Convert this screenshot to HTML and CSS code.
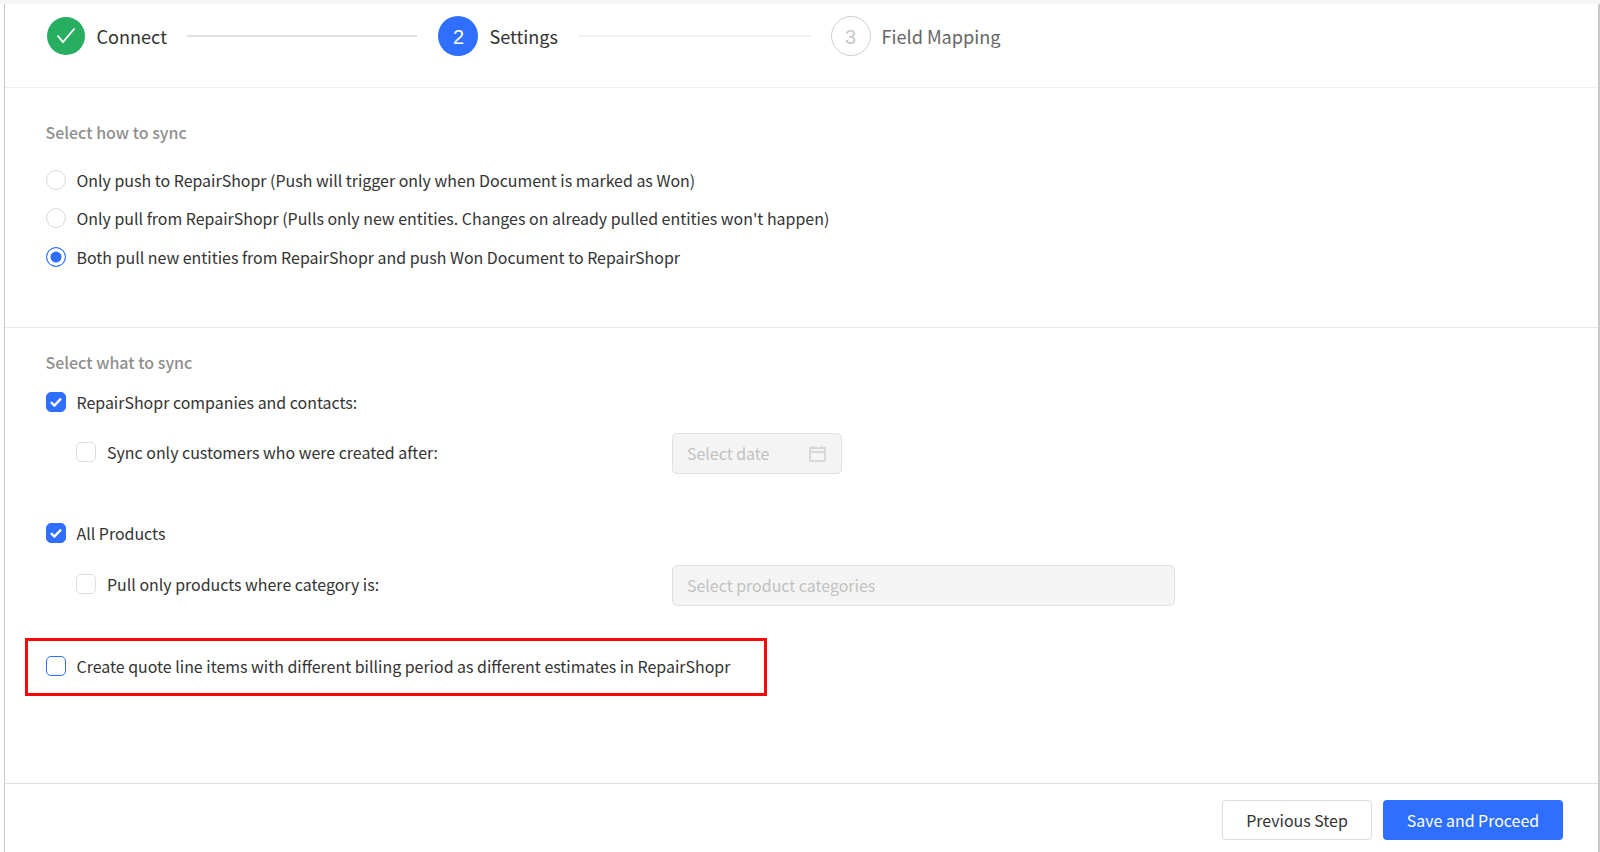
FILE: index.html
```html
<!DOCTYPE html>
<html lang="en">
<head>
<meta charset="utf-8">
<title>RepairShopr sync settings</title>
<link rel="stylesheet" href="styles.css">
</head>
<body>
<div class="page">
  <header class="stepper">
    <div class="step">
      <span class="bubble bubble-done">
        <svg width="20" height="17" viewBox="0 0 20 17"><path d="M1.500 8.500l5.500 6.500L18.500 1.500" fill="none" stroke="#fff" stroke-width="1.800"/></svg>
      </span>
      <span class="step-name">Connect</span>
    </div>
    <span class="rail rail-a"></span>
    <div class="step">
      <span class="bubble bubble-now">2</span>
      <span class="step-name">Settings</span>
    </div>
    <span class="rail rail-b"></span>
    <div class="step">
      <span class="bubble bubble-next">3</span>
      <span class="step-name step-muted">Field Mapping</span>
    </div>
  </header>

  <section class="how">
    <h2 class="heading">Select how to sync</h2>
    <div class="radios">
      <label class="row"><span class="radio"></span>Only push to RepairShopr (Push will trigger only when Document is marked as Won)</label>
      <label class="row"><span class="radio"></span>Only pull from RepairShopr (Pulls only new entities. Changes on already pulled entities won't happen)</label>
      <label class="row"><span class="radio radio-on"></span>Both pull new entities from RepairShopr and push Won Document to RepairShopr</label>
    </div>
  </section>

  <section class="what">
    <h2 class="heading">Select what to sync</h2>
    <label class="row row-first"><span class="check check-on"><svg width="14" height="12" viewBox="0 0 14 12"><path d="M2 6.200l3.400 3.400L12 2.600" fill="none" stroke="#fff" stroke-width="2.400"/></svg></span>RepairShopr companies and contacts:</label>
    <div class="sub">
      <label class="row sub-label"><span class="check"></span>Sync only customers who were created after:</label>
      <div class="field field-date">
        <span>Select date</span>
        <svg width="17" height="17" viewBox="0 0 17 17"><path d="M1 3h15v13H1zM1 7h15M4.500 1v3M12.500 1v3" fill="none" stroke="#cfcfcf" stroke-width="1.400"/></svg>
      </div>
    </div>
    <label class="row row-second"><span class="check check-on"><svg width="14" height="12" viewBox="0 0 14 12"><path d="M2 6.200l3.400 3.400L12 2.600" fill="none" stroke="#fff" stroke-width="2.400"/></svg></span>All Products</label>
    <div class="sub sub-second">
      <label class="row sub-label"><span class="check"></span>Pull only products where category is:</label>
      <div class="field field-wide"><span>Select product categories</span></div>
    </div>
    <div class="callout">
      <label class="row"><span class="check check-focus"></span>Create quote line items with different billing period as different estimates in RepairShopr</label>
    </div>
  </section>

  <footer class="actions">
    <button class="btn btn-ghost" type="button">Previous Step</button>
    <button class="btn btn-primary" type="button">Save and Proceed</button>
  </footer>
</div>
</body>
</html>
```
FILE: styles.css
```css
* { box-sizing: border-box; }
html, body { margin: 0; height: 852px; overflow: hidden; background: #fff; }
body {
  padding: 4px 0 0 4px;
  background: linear-gradient(#f5f5f5 4px, #fff 4px);
  font-family: "Noto Sans CJK SC", "Noto Sans", sans-serif;
  font-size: 15.950px;
  color: #333;
}
.page {
  height: 848px;
  background: #fff;
  border-left: 1.500px solid #c8c8c8;
  border-right: 2px solid #c8c8c8;
  display: flex;
  flex-direction: column;
}
.stepper {
  height: 84px;
  flex: none;
  border-bottom: 1.500px solid #efefef;
  padding: 11px 0 0 41.500px;
  display: flex;
  align-items: flex-start;
}
.step { display: flex; align-items: center; height: 41px; }
.bubble {
  width: 40px;
  height: 40px;
  flex: none;
  border-radius: 50%;
  display: flex;
  align-items: center;
  justify-content: center;
  padding-top: 3px;
  font-family: "Liberation Sans", sans-serif;
  font-size: 20px;
}
.bubble-done { width: 38px; height: 38px; padding-top: 0; margin-right: 1px; background: #27ae60; }
.bubble-now { background: #2e6fff; color: #fff; }
.bubble-next { border: 1.500px solid #cfcfcf; color: #c8c8c8; }
.step-name { margin-left: 11px; font-size: 18.100px; color: #333; }
.step-muted { color: #666; }
.rail { height: 1.500px; margin-top: 20px; flex: none; }
.rail-a { width: 230px; margin-left: 20.500px; margin-right: 21px; background: #e2e2e2; }
.rail-b { width: 232px; margin-left: 20.500px; margin-right: 20px; background: #f0f0f0; }
.how {
  height: 240px;
  flex: none;
  border-bottom: 1.500px solid #e8e8e8;
  padding: 31px 0 0 40.500px;
}
.heading {
  margin: 0;
  font-size: 16px;
  line-height: 26px;
  font-weight: 500;
  color: #8f8f8f;
}
.radios { margin-top: 23px; display: flex; flex-direction: column; gap: 14.400px; }
.row { display: flex; align-items: center; height: 24px; line-height: 24px; white-space: nowrap; }
.radio {
  width: 20px;
  height: 20px;
  margin-right: 11px;
  flex: none;
  border-radius: 50%;
  border: 1.500px solid #d9d9d9;
  background: #fff;
}
.radio-on { border-color: #2e6fff; box-shadow: inset 0 0 0 3.500px #fff; background: #2e6fff; }
.what {
  flex: 1;
  padding: 21px 0 0 40.500px;
}
.row-first { margin-top: 15px; }
.check {
  width: 20px;
  height: 20px;
  margin-right: 11px;
  flex: none;
  border-radius: 5px;
  border: 1.500px solid #dedede;
  background: #fff;
  display: flex;
  align-items: center;
  justify-content: center;
}
.check-on { background: #2e6fff; border-color: #2e6fff; }
.check-focus { border-color: #2e6fff; }
.sub {
  display: flex;
  align-items: center;
  margin-top: 15.500px;
  padding-left: 30.500px;
}
.sub-second { margin-top: 16.500px; }
.sub-label { width: 595.500px; flex: none; }
.field {
  height: 41px;
  margin-top: 3px;
  flex: none;
  padding: 0 15px 0 14.500px;
  border: 1.500px solid #e0e0e0;
  border-radius: 5px;
  background: #f4f4f4;
  color: #c2c2c2;
  display: flex;
  align-items: center;
  justify-content: space-between;
}
.field-date { width: 170px; }
.field-wide { width: 503px; }
.row-second { margin-top: 47.500px; }
.callout {
  width: 742px;
  height: 58px;
  margin: 32.500px 0 0 -20.500px;
  padding: 0 0 3px 17.500px;
  border: 3px solid #fa0808;
  display: flex;
  align-items: center;
}
.actions {
  height: 69px;
  flex: none;
  border-top: 1.500px solid #e0e0e0;
  padding: 16px 35px 0 0;
  display: flex;
  justify-content: flex-end;
  gap: 11px;
}
.btn {
  height: 40px;
  border-radius: 4px;
  font: inherit;
  cursor: pointer;
}
.btn-ghost { width: 150px; background: #fff; border: 1.500px solid #dcdcdc; color: #333; }
.btn-primary { width: 180px; background: #2e6fff; border: 0; color: #fff; }
```
